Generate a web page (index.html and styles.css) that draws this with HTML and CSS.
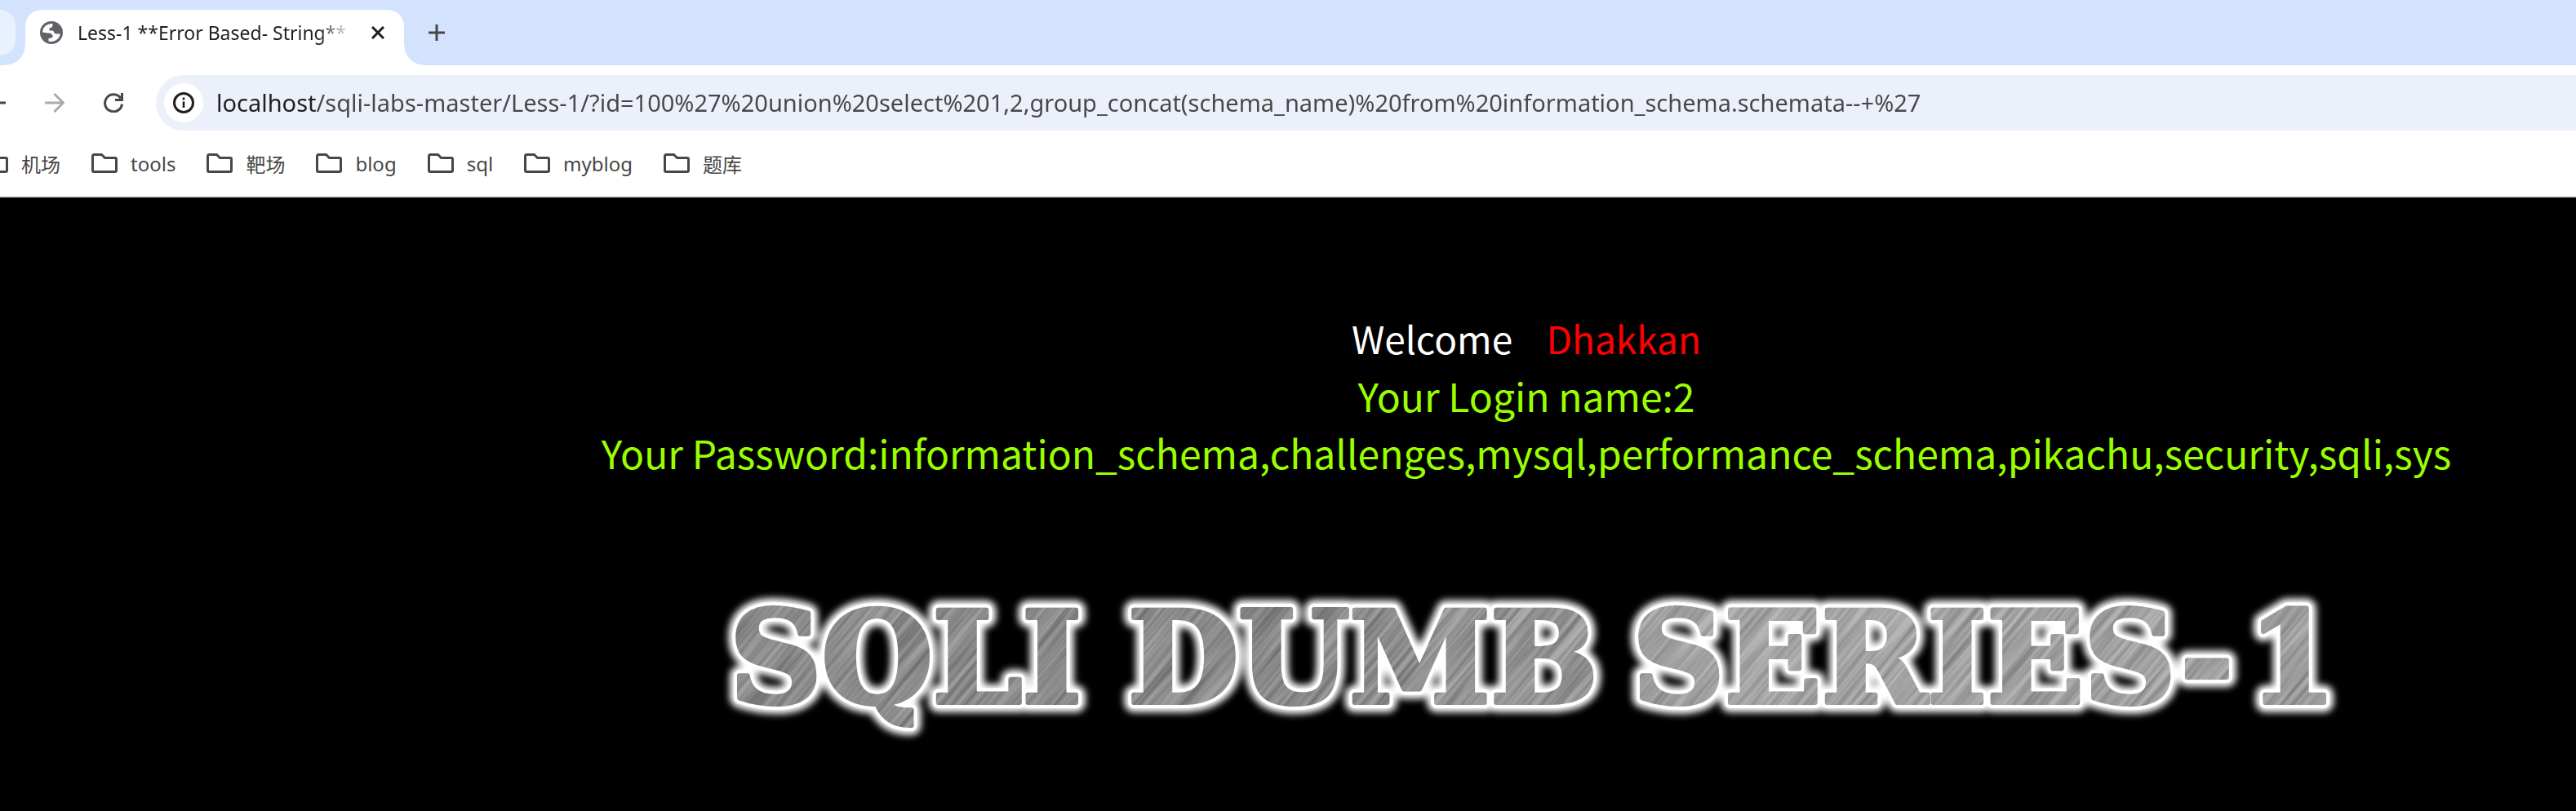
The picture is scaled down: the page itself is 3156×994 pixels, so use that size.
FILE: index.html
```html
<!DOCTYPE html>
<html lang="en">
	<head>
		<meta charset="utf-8">
		<title>Less-1 **Error Based- String**</title>
		<link rel="stylesheet" href="styles.css">
	</head>
	<body>
		<svg class="sprite" aria-hidden="true">
			<symbol id="folder" viewBox="0 0 32 24">
				<path d="M3 1.5h9.500l4 4H29a1.500 1.500 0 0 1 1.500 1.500v14a1.500 1.500 0 0 1-1.500 1.500H3a1.500 1.500 0 0 1-1.500-1.500V3A1.500 1.500 0 0 1 3 1.500z" fill="none" stroke="#474747" stroke-width="3"/>
			</symbol>
		</svg>
		<!--tab strip-->
		<div class="tabs">
			<div class="tab-prev"></div>
			<div class="tab">
				<svg class="globe" viewBox="0 0 28 28">
					<circle cx="14" cy="14" r="14" fill="#5f6368"/>
					<path d="M3 13.500A11 11 0 0 1 15.500 3.100C16 6 14.500 8 11.500 8.500V11.500H15C17.500 11.500 17 15.500 19.500 15.500H24.800A11 11 0 0 1 10.500 24.400V21C14.500 21 16.500 19.500 15.500 17.500 14.500 15 12 14.500 9 14.500z" fill="#fff"/>
				</svg>
				<span class="tab-title">Less-1 **Error Based- String**</span>
				<button type="button" class="close" aria-label="Close tab">
					<svg width="16" height="16" viewBox="0 0 16 16"><path d="M1 1l14 14M15 1L1 15" stroke="#1f1f1f" stroke-width="3"/></svg>
				</button>
			</div>
			<button type="button" class="new-tab" aria-label="New tab">
				<svg width="20" height="20" viewBox="0 0 20 20"><path d="M10 0v20M0 10h20" stroke="#474747" stroke-width="3"/></svg>
			</button>
		</div>
		<!--/tab strip-->
		<!--toolbar-->
		<div class="toolbar">
			<button type="button" class="back" aria-label="Back">
				<svg width="24" height="24" viewBox="0 0 24 24"><path d="M24 12H2M12 1L1.500 12 12 23" fill="none" stroke="#474747" stroke-width="3"/></svg>
			</button>
			<button type="button" aria-label="Forward" disabled>
				<svg width="24" height="24" viewBox="0 0 24 24"><path d="M0 12h22M11.500 1l11 11-11 11" fill="none" stroke="#ababab" stroke-width="3"/></svg>
			</button>
			<button type="button" aria-label="Reload">
				<svg width="24" height="24" viewBox="0 0 24 24"><path d="M20.800 6.500A10.500 10.500 0 1 0 22.500 13.500M22.500 0v8.500H14" fill="none" stroke="#474747" stroke-width="3"/></svg>
			</button>
			<div class="omnibox">
				<button type="button" class="info" aria-label="Site information">
					<svg width="26" height="26" viewBox="0 0 26 26"><circle cx="13" cy="13" r="11.500" fill="none" stroke="#1f1f1f" stroke-width="3"/><path d="M13 11.500v7.500M13 6.500v3" stroke="#1f1f1f" stroke-width="2.600"/></svg>
				</button>
				<input type="text" class="url" aria-label="Address" spellcheck="false" value="localhost/sqli-labs-master/Less-1/?id=100%27%20union%20select%201,2,group_concat(schema_name)%20from%20information_schema.schemata--+%27">
			</div>
		</div>
		<!--/toolbar-->
		<!--bookmarks-->
		<nav class="bookmarks">
			<a href="#"><svg class="folder"><use href="#folder"/></svg>机场</a>
			<a href="#"><svg class="folder"><use href="#folder"/></svg>tools</a>
			<a href="#"><svg class="folder"><use href="#folder"/></svg>靶场</a>
			<a href="#"><svg class="folder"><use href="#folder"/></svg>blog</a>
			<a href="#"><svg class="folder"><use href="#folder"/></svg>sql</a>
			<a href="#"><svg class="folder"><use href="#folder"/></svg>myblog</a>
			<a href="#"><svg class="folder"><use href="#folder"/></svg>题库</a>
		</nav>
		<!--/bookmarks-->
		<!--page-->
		<main class="page">
			<div class="welcome">Welcome&nbsp;&nbsp;&nbsp;&nbsp;<span class="name">Dhakkan</span></div>
			<div class="result">Your Login name:2</div>
			<div class="result">Your Password:information_schema,challenges,mysql,performance_schema,pikachu,security,sqli,sys</div>
			<svg class="banner" viewBox="0 0 2000 200">
				<defs>
					<linearGradient id="metal" gradientUnits="userSpaceOnUse" x1="0" y1="0" x2="2000" y2="0">
						<stop offset="0" stop-color="#8a8a8a"/>
						<stop offset=".35" stop-color="#868686"/>
						<stop offset=".5" stop-color="#979797"/>
						<stop offset=".65" stop-color="#a8a8a8"/>
						<stop offset="1" stop-color="#9c9c9c"/>
					</linearGradient>
					<!--brushed scratches-->
					<filter id="scratch" x="0" y="0" width="100%" height="100%" color-interpolation-filters="sRGB">
						<feTurbulence type="fractalNoise" baseFrequency=".006 .18" numOctaves="3" seed="4"/>
						<feColorMatrix values="1.8 0 0 0 -.3  1.8 0 0 0 -.3  1.8 0 0 0 -.3  0 0 0 0 .2"/>
					</filter>
					<filter id="soft" x="-5%" y="-30%" width="110%" height="160%">
						<feGaussianBlur stdDeviation="4"/>
					</filter>
					<g id="words">
						<text x="24" y="162">SQLI</text>
						<text x="512" y="162">DUMB</text>
						<text x="1130" y="162">SERIES-</text>
						<text x="1884" y="162">1</text>
					</g>
					<mask id="letters" maskUnits="userSpaceOnUse" x="0" y="0" width="2000" height="230">
						<use href="#words" class="shape"/>
					</mask>
				</defs>
				<use href="#words" class="glow" filter="url(#soft)"/>
				<use href="#words" class="edge"/>
				<use href="#words" class="metal"/>
				<g mask="url(#letters)">
					<rect x="-300" y="-100" width="1800" height="1800" transform="rotate(-50)" filter="url(#scratch)"/>
				</g>
			</svg>
		</main>
		<!--/page-->
	</body>
</html>
```
FILE: styles.css
```css
body{
	margin:0;
	min-height:100vh;
	display:flex;
	flex-direction:column;
	overflow:hidden;
	background:#fff;
	font-family:"Noto Sans", "Noto Sans CJK SC", sans-serif;
	font-size:24px;
	color:#474747;
}
svg{
	display:block;
	flex:none;
}
button{
	display:flex;
	align-items:center;
	justify-content:center;
	padding:0;
	border:0;
	background:none;
}
.sprite{
	position:absolute;
	width:0;
	height:0;
}
/* tab strip */
.tabs{
	display:flex;
	height:68px;
	padding-top:12px;
	background:#d3e3fd;
}
.tab-prev{
	width:19px;
	height:56px;
	margin-right:12px;
	background:#e9f1fe;
	border-radius:0 20px 20px 0;
}
.tab{
	position:relative;
	display:flex;
	align-items:center;
	box-sizing:border-box;
	width:464px;
	height:68px;
	padding:0 24px 12px 18px;
	background:#fff;
	border-radius:20px 20px 0 0;
}
/* curved feet of the active tab */
.tab:before, .tab:after{
	content:"";
	position:absolute;
	bottom:0;
	width:24px;
	height:24px;
}
.tab:before{
	left:-24px;
	background:radial-gradient(circle at 0 0, transparent 23px, #fff 24px);
}
.tab:after{
	right:-24px;
	background:radial-gradient(circle at 100% 0, transparent 23px, #fff 24px);
}
.globe{
	width:28px;
	height:28px;
}
.tab-title{
	flex:1;
	margin:0 24px 0 18px;
	overflow:hidden;
	white-space:nowrap;
	font-size:23px;
	color:#1f1f1f;
	-webkit-mask-image:linear-gradient(to left, transparent, #000 40px);
	mask-image:linear-gradient(to left, transparent, #000 40px);
}
.new-tab{
	width:56px;
	height:56px;
	margin-left:12px;
}
/* toolbar */
.toolbar{
	display:flex;
	align-items:center;
	height:68px;
	padding-top:12px;
}
.toolbar > button{
	width:24px;
	height:48px;
	margin-right:48px;
}
.toolbar > .back{
	margin-left:-17px;
}
.omnibox{
	flex:1;
	display:flex;
	align-items:center;
	height:68px;
	margin-left:-8px;
	padding-left:10px;
	background:#ecf0fa;
	border-radius:34px 0 0 34px;
}
.info{
	width:48px;
	height:48px;
	background:#fff;
	border-radius:50%;
}
.url{
	flex:1;
	height:48px;
	margin-left:16px;
	padding:0 0 2px;
	border:0;
	outline:none;
	font:inherit;
	font-size:29px;
	/* host is darker than the path */
	background:linear-gradient(to right, #1f1f1f 122px, #474747 122px);
	-webkit-background-clip:text;
	background-clip:text;
	-webkit-text-fill-color:transparent;
}
/* bookmarks */
.bookmarks{
	display:flex;
	align-items:center;
	gap:38px;
	height:80px;
	margin-left:-22px;
}
.bookmarks a{
	display:flex;
	align-items:center;
	gap:16px;
	color:#474747;
	text-decoration:none;
	white-space:nowrap;
}
.folder{
	width:32px;
	height:24px;
}
/* page */
.page{
	flex:1;
	padding:137px 0 0 584px;
	border-top:2px solid #dcdcdc;
	background:#000;
	font-family:"Noto Sans CJK SC", sans-serif;
	font-size:48px;
	line-height:70px;
	text-align:center;
}
.welcome{
	font-size:46px;
	color:#fff;
}
.name{
	color:#f00;
}
.result{
	color:#9f0;
}
.banner{
	width:2000px;
	max-width:100%;
	margin:110px auto 0;
	overflow:visible;
	font-family:"DejaVu Serif", serif;
	font-size:156px;
	font-weight:bold;
	stroke-linejoin:round;
}
.glow{
	fill:#fff;
	stroke:#fff;
	stroke-width:24px;
}
.edge{
	fill:#fff;
	stroke:#fff;
	stroke-width:14px;
}
.metal{
	fill:url(#metal);
	stroke:url(#metal);
	stroke-width:6px;
}
.shape{
	fill:#fff;
	stroke:#fff;
	stroke-width:6px;
}
```
